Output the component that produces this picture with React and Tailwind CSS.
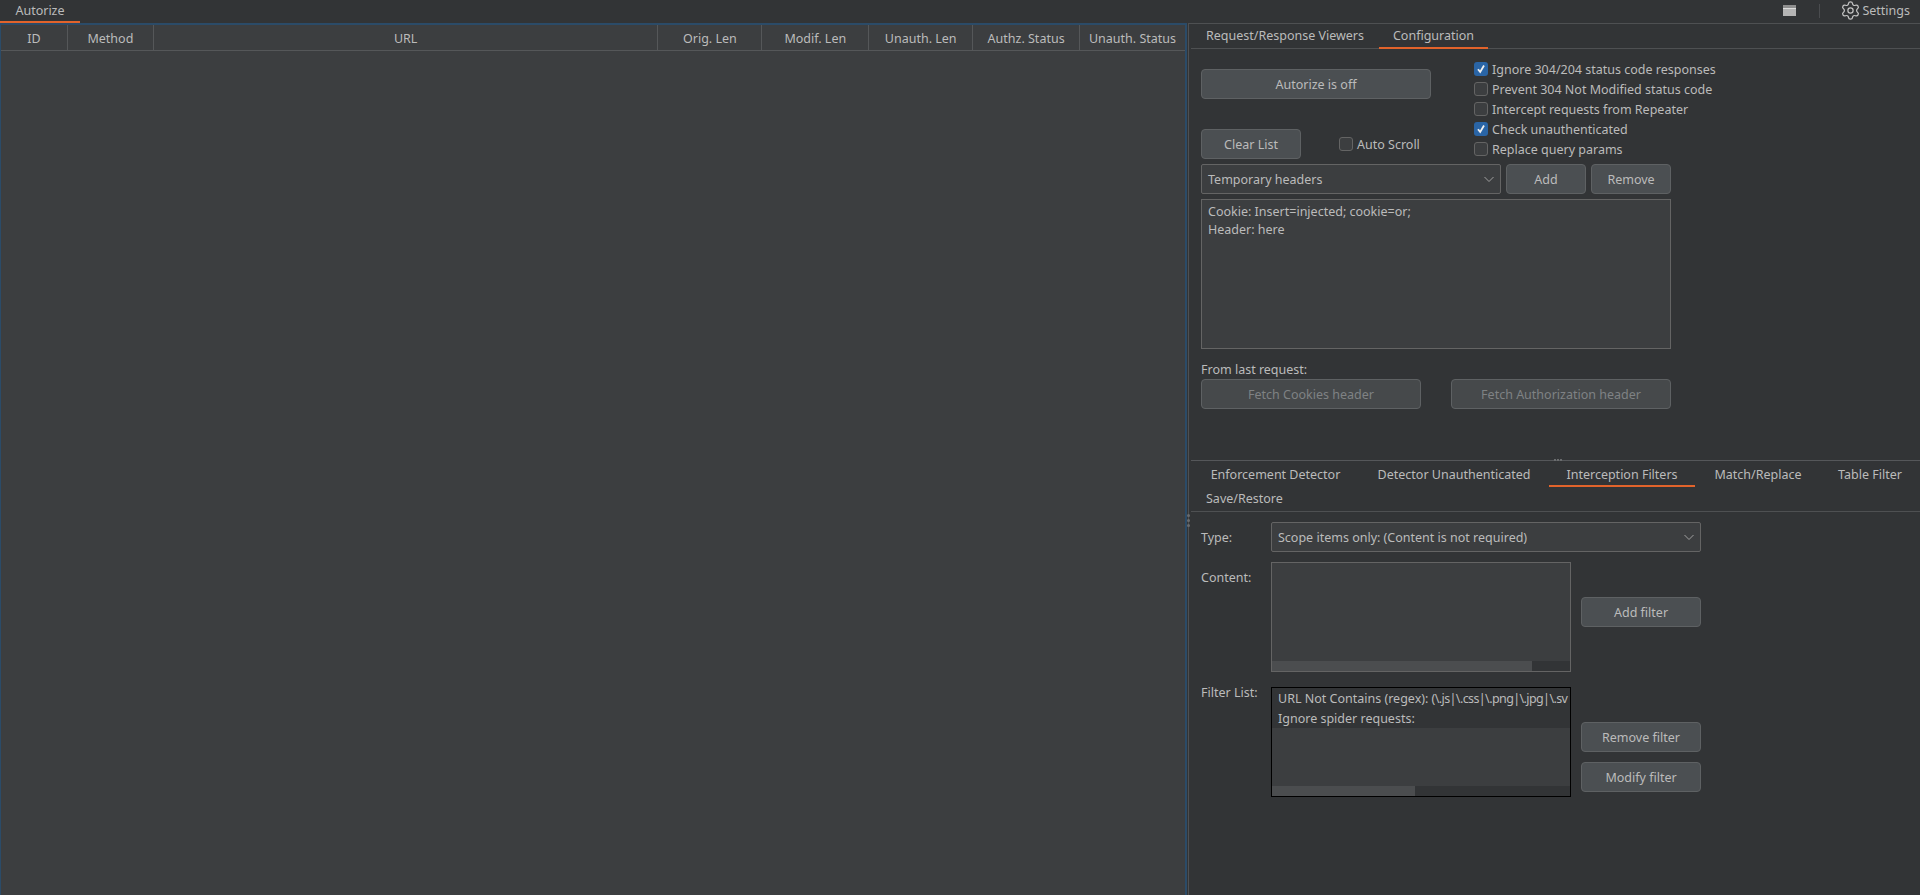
import { Settings } from 'lucide-react'

const columns = [
  { label: 'ID', width: 'w-[67px]' },
  { label: 'Method', width: 'w-[86px]' },
  { label: 'URL', width: 'w-[505px]' },
  { label: 'Orig. Len', width: 'w-[104px]' },
  { label: 'Modif. Len', width: 'w-[107px]' },
  { label: 'Unauth. Len', width: 'w-[104px]' },
  { label: 'Authz. Status', width: 'w-[107px]' },
  { label: 'Unauth. Status', width: 'w-[105px]' }
]

const options = [
  { label: 'Ignore 304/204 status code responses', checked: true },
  { label: 'Prevent 304 Not Modified status code', checked: false },
  { label: 'Intercept requests from Repeater', checked: false },
  { label: 'Check unauthenticated', checked: true },
  { label: 'Replace query params', checked: false }
]

function Checkbox({ checked, label }) {
  return (
    <div className="flex items-center gap-1 h-[14px]">
      {checked ? (
        <span className="w-[14px] h-[14px] rounded-[3px] bg-[#2a65a6] flex items-center justify-center">
          <svg width="10" height="10" viewBox="0 0 10 10" fill="none" stroke="#f0f0f0" strokeWidth="1.8">
            <path d="M2 5.2 L4.2 8 L8 1.5" />
          </svg>
        </span>
      ) : (
        <span className="w-[14px] h-[14px] rounded-[3px] border border-[#646464] bg-[#3c3e40]" />
      )}
      <span className="whitespace-nowrap pt-[2px]">{label}</span>
    </div>
  )
}

function Button({ children, className = '', disabled }) {
  return (
    <button
      className={`h-[30px] pt-[2px] rounded-[4px] border border-[#5e6163] flex items-center justify-center whitespace-nowrap ${
        disabled ? 'bg-[#46494b] text-[#7f8284]' : 'bg-[#4b4f52] text-[#bbbbbb]'
      } ${className}`}
    >
      {children}
    </button>
  )
}

function Select({ value, className = '' }) {
  return (
    <div className={`h-[30px] rounded-[2px] border border-[#646464] bg-[#3c3e40] flex items-center justify-between pl-[6px] pr-[5px] ${className}`}>
      <span className="whitespace-nowrap pt-[2px]">{value}</span>
      <svg width="12" height="12" viewBox="0 0 12 12" fill="none" stroke="#a0a0a0" strokeWidth="1">
        <path d="M1.5 4 L6 8.5 L10.5 4" />
      </svg>
    </div>
  )
}

function Tab({ children, active, className = '' }) {
  return (
    <div className={`flex items-center justify-center whitespace-nowrap border-b-2 ${active ? 'border-[#e2632b]' : 'border-transparent'} ${className}`}>
      {children}
    </div>
  )
}

export default function App() {
  return (
    <div
      className="w-[1920px] h-[895px] overflow-hidden flex flex-col bg-[#323436] text-[#bbbbbb] text-[12.5px] leading-[18px]"
      style={{ fontFamily: '"Noto Sans", sans-serif' }}
    >
      {/* top bar */}
      <div className="h-[23px] flex items-start justify-between shrink-0">
        <Tab active className="w-[80px] h-[23px] pt-px">Autorize</Tab>
        <div className="flex items-center h-[21px]">
          <svg width="13" height="11" viewBox="0 0 13 11" className="mr-[23px]">
            <rect width="13" height="3" fill="#8e8e8e" />
            <rect y="3" width="13" height="1" fill="#dcdcdc" />
            <rect y="4" width="13" height="7" fill="#b4b4b4" />
          </svg>
          <div className="w-px h-[14px] bg-[#4a4c4f] mr-[20px]" />
          <Settings size={21} strokeWidth={1.4} className="text-[#c4c4c4] mr-px" />
          <span className="mr-[10px]">Settings</span>
        </div>
      </div>

      <div className="flex-1 flex min-h-0">
        {/* results table */}
        <div className="w-[1187px] shrink-0 flex flex-col bg-[#3c3e40] border-t-2 border-l border-r-2 border-[#2b4b68]">
          <div className="flex h-[26px] border-b border-[#555759]">
            {columns.map((col, i) => (
              <div
                key={col.label}
                className={`${col.width} pt-[2px] flex items-center justify-center whitespace-nowrap ${i < columns.length - 1 ? 'border-r border-[#555759]' : ''}`}
              >
                {col.label}
              </div>
            ))}
          </div>
        </div>

        {/* right side */}
        <div className="relative flex-1 min-w-0 ml-px border-l border-t border-[#4e5052]">
          <div className="absolute -left-[2px] top-[490px] flex flex-col gap-[2px]">
            <span className="w-[3px] h-[3px] rounded-full bg-[#6a6c6e]" />
            <span className="w-[3px] h-[3px] rounded-full bg-[#6a6c6e]" />
            <span className="w-[3px] h-[3px] rounded-full bg-[#6a6c6e]" />
          </div>

          <div className="flex flex-col pl-[2px]">
            <div className="h-[25px] flex items-stretch border-b border-[#4e5052] shrink-0">
              <Tab className="w-[188px] -mb-px">Request/Response Viewers</Tab>
              <Tab active className="w-[109px] -mb-px">Configuration</Tab>
            </div>

            <div className="relative h-[412px] pl-[10px] border-b border-[#55575a] shrink-0">
              <div className="flex h-[110px]">
                <div className="w-[273px] flex flex-col pt-[20px]">
                  <Button className="w-[230px]">Autorize is off</Button>
                  <div className="flex items-center mt-[30px]">
                    <Button className="w-[100px] mr-[38px]">Clear List</Button>
                    <Checkbox label="Auto Scroll" />
                  </div>
                </div>
                <div className="flex flex-col gap-[6px] pt-[13px]">
                  {options.map(opt => (
                    <Checkbox key={opt.label} label={opt.label} checked={opt.checked} />
                  ))}
                </div>
              </div>

              <div className="flex mt-[5px]">
                <Select value="Temporary headers" className="w-[300px]" />
                <Button className="w-[80px] ml-[5px]">Add</Button>
                <Button className="w-[80px] ml-[5px]">Remove</Button>
              </div>

              <div className="w-[470px] h-[150px] mt-[5px] border border-[#646464] bg-[#3c3e40] px-[6px] pt-[3px]">
                <div>Cookie: Insert=injected; cookie=or;</div>
                <div>Header: here</div>
              </div>

              <div className="mt-[12px] h-[18px]">From last request:</div>
              <div className="flex">
                <Button disabled className="w-[220px]">Fetch Cookies header</Button>
                <Button disabled className="w-[220px] ml-[30px]">Fetch Authorization header</Button>
              </div>

              <div className="absolute left-[363px] -bottom-px h-[3px] flex gap-px translate-y-px">
                <span className="w-[2px] h-[2px] bg-[#6a6c6e]" />
                <span className="w-[2px] h-[2px] bg-[#6a6c6e]" />
                <span className="w-[2px] h-[2px] bg-[#6a6c6e]" />
              </div>
            </div>

            {/* lower tabs */}
            <div className="h-[51px] border-b border-[#4e5052] shrink-0">
              <div className="flex h-[26px]">
                <Tab className="w-[165px] ml-[2px] pt-[4px]">Enforcement Detector</Tab>
                <Tab className="w-[186px] ml-[3px] pt-[4px]">Detector Unauthenticated</Tab>
                <Tab active className="w-[146px] ml-[2px] pt-[4px]">Interception Filters</Tab>
                <Tab className="w-[122px] ml-[2px] pt-[4px]">Match/Replace</Tab>
                <Tab className="w-[98px] ml-[2px] pt-[4px]">Table Filter</Tab>
              </div>
              <div className="h-[24px] pl-[15px] flex items-center">Save/Restore</div>
            </div>

            <div className="pl-[10px] pt-[10px]">
              <div className="flex items-center h-[30px]">
                <div className="w-[70px] pt-[2px]">Type:</div>
                <Select value="Scope items only: (Content is not required)" className="w-[430px]" />
              </div>

              <div className="flex mt-[10px]">
                <div className="w-[70px] pt-[7px]">Content:</div>
                <div className="w-[300px] h-[110px] border border-[#646464] bg-[#3c3e40] flex flex-col justify-end">
                  <div className="h-[10px] bg-[#323436]">
                    <div className="h-full w-[260px] bg-[#4b4d4f]" />
                  </div>
                </div>
                <Button className="w-[120px] ml-[10px] mt-[35px]">Add filter</Button>
              </div>

              <div className="flex mt-[15px]">
                <div className="w-[70px] -mt-[3px]">Filter List:</div>
                <div className="w-[300px] h-[110px] border border-black bg-[#3c3e40] flex flex-col justify-between">
                  <div className="bg-[#323436]">
                    <div className="h-[20px] px-[6px] pt-[2px] flex items-center whitespace-nowrap">
                      <span>URL Not Contains (regex):&nbsp;</span>
                      <span className="tracking-[-0.6px]">(\.js|\.css|\.png|\.jpg|\.sv</span>
                    </div>
                    <div className="h-[20px] px-[6px] pt-[2px] flex items-center">Ignore spider requests:</div>
                  </div>
                  <div className="h-[10px] bg-[#323436]">
                    <div className="h-full w-[143px] bg-[#4b4d4f]" />
                  </div>
                </div>
                <div className="ml-[10px] mt-[35px] flex flex-col gap-[10px]">
                  <Button className="w-[120px]">Remove filter</Button>
                  <Button className="w-[120px]">Modify filter</Button>
                </div>
              </div>
            </div>
          </div>
        </div>
      </div>
    </div>
  )
}
